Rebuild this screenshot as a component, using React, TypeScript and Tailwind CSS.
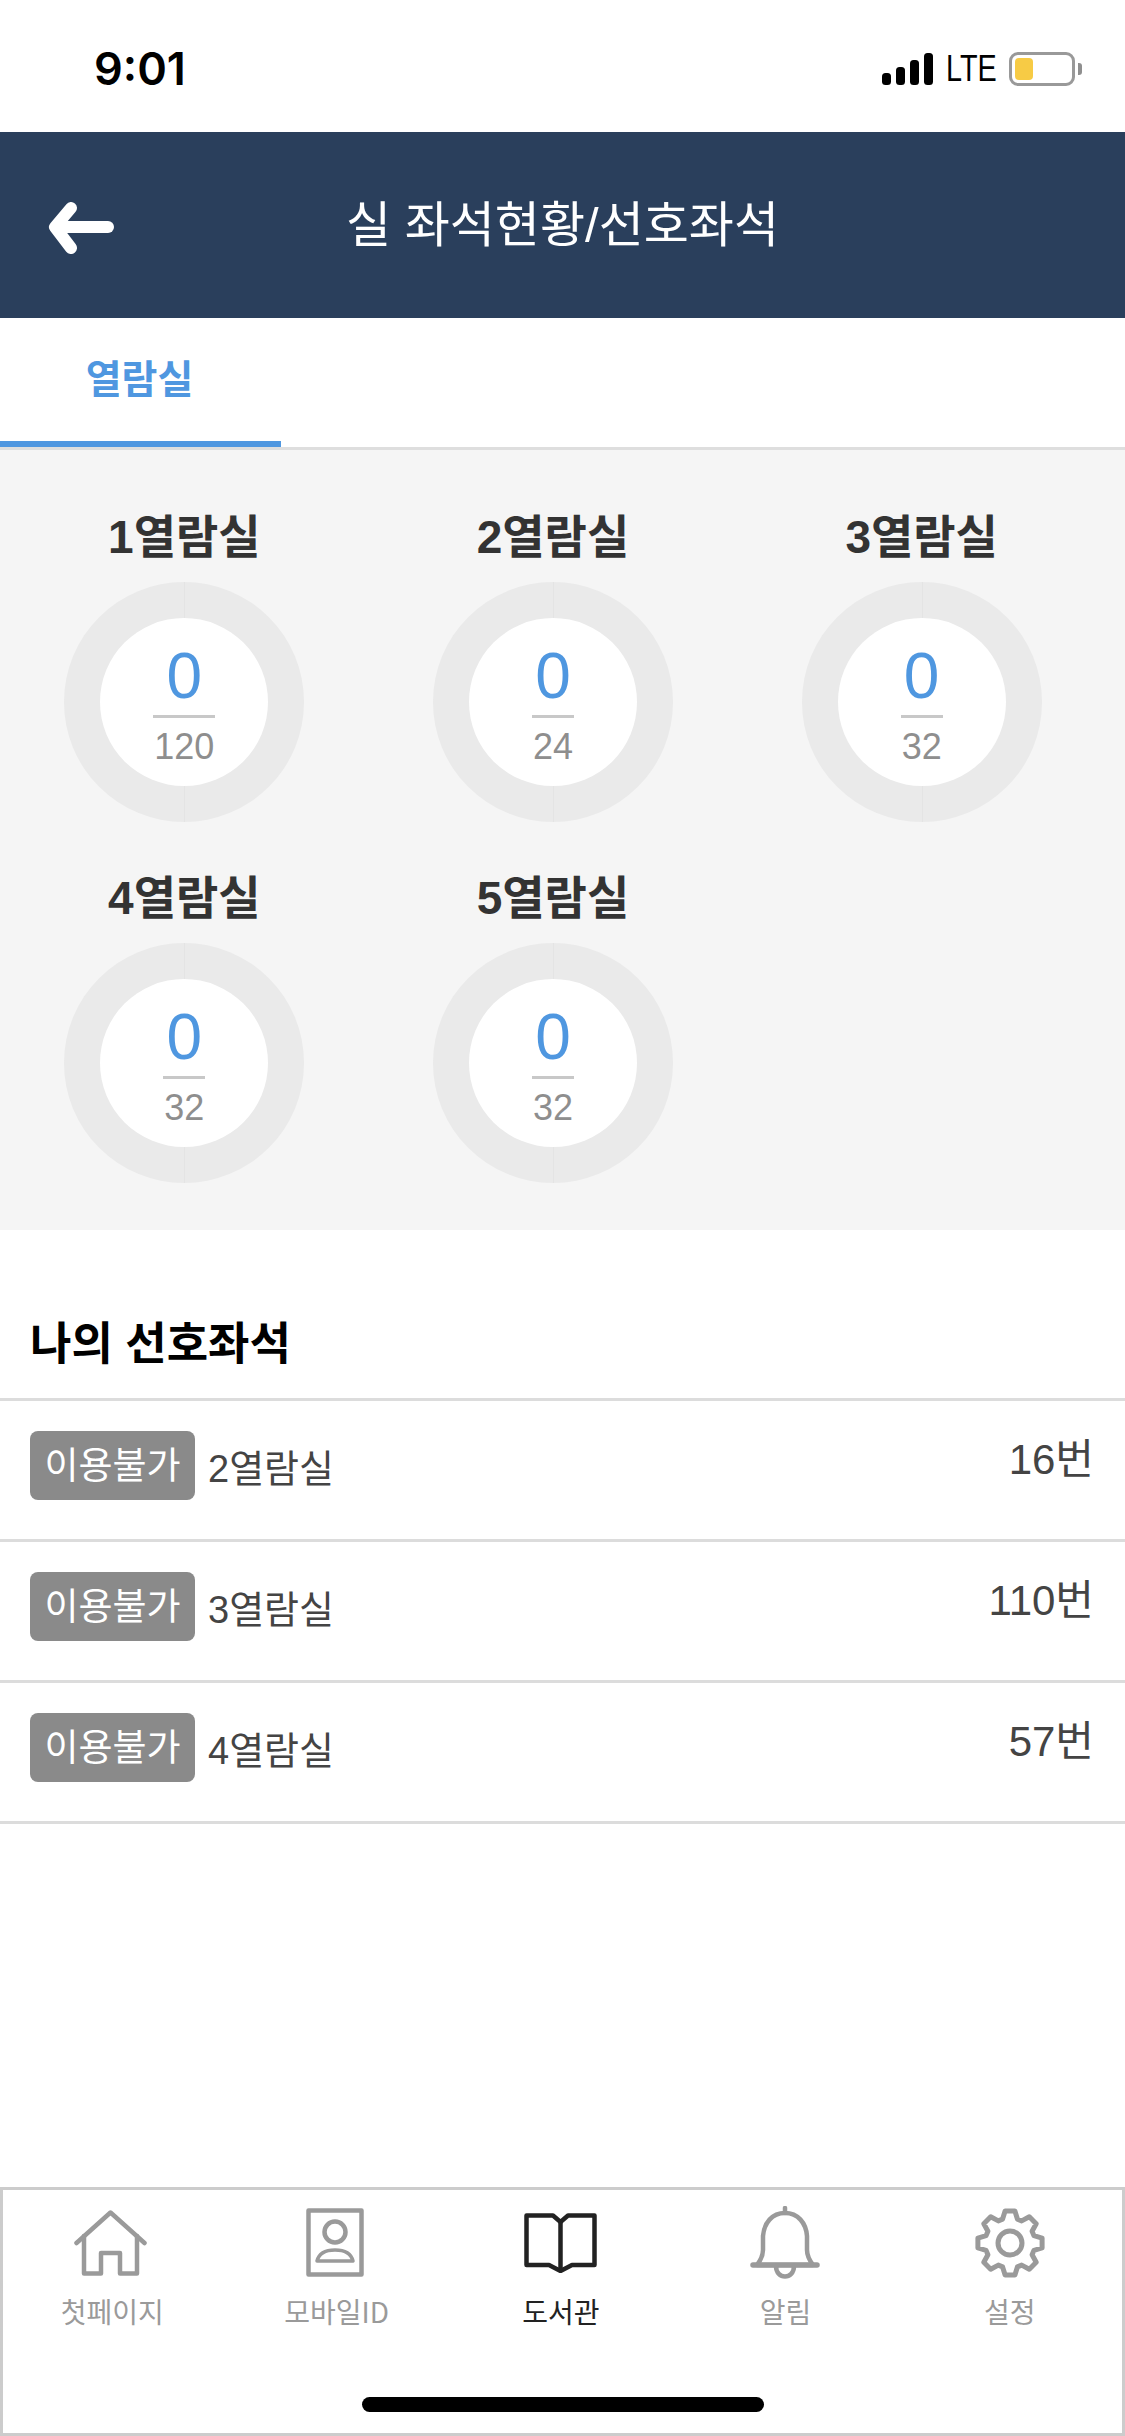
const rooms = [
  { name: "1열람실", used: 0, total: 120 },
  { name: "2열람실", used: 0, total: 24 },
  { name: "3열람실", used: 0, total: 32 },
  { name: "4열람실", used: 0, total: 32 },
  { name: "5열람실", used: 0, total: 32 },
];

const favorites = [
  { room: "2열람실", seat: "16번" },
  { room: "3열람실", seat: "110번" },
  { room: "4열람실", seat: "57번" },
];

// 8 tooth gear outline, worked out once instead of hand typing 40 points
const gearPath = () => {
  const cx = 35;
  const cy = 35;
  const pts: string[] = [];
  for (let i = 0; i < 8; i++) {
    const a = (i * Math.PI) / 4 - Math.PI / 2;
    const step = [
      [-0.3, 25],
      [-0.15, 32.5],
      [0.15, 32.5],
      [0.3, 25],
    ];
    step.forEach(([da, r]) => {
      pts.push(`${(cx + r * Math.cos(a + da)).toFixed(1)} ${(cy + r * Math.sin(a + da)).toFixed(1)}`);
    });
  }
  return "M" + pts.join(" L") + " Z";
};

const StatusBar = () => (
  <div className="h-[132px] bg-white flex items-start justify-between pl-[94px] pr-[43px] pt-[40px]">
    <p className="text-[45px] leading-[58px] font-semibold text-black font-['Inter',sans-serif]">9:01</p>
    <div className="flex items-center pt-[11px]">
      <svg width="51" height="32" viewBox="0 0 51 32" fill="#000">
        <rect x="0" y="20" width="9" height="12" rx="3.5" />
        <rect x="14" y="14" width="9" height="18" rx="3.5" />
        <rect x="28" y="7" width="9" height="25" rx="3.5" />
        <rect x="42" y="0" width="9" height="32" rx="3.5" />
      </svg>
      <span className="ml-[13px] w-[50px] text-[36px] leading-[36px] text-black origin-left scale-x-[0.8] font-['Liberation_Sans',sans-serif]">LTE</span>
      <div className="ml-[13px] w-[66px] h-[34px] rounded-[9px] border-[3px] border-[#999999] p-[3px]">
        <div className="w-[18px] h-[22px] rounded-[4px] bg-[#f7cb45]"></div>
      </div>
      <div className="ml-[3px] w-[4px] h-[12px] rounded-r-[3px] bg-[#8f8f8f]"></div>
    </div>
  </div>
);

const RoomCell = ({ name, used, total }: { name: string; used: number; total: number }) => (
  <div className="flex flex-col items-center">
    <p className="text-[46px] leading-[60px] font-bold text-[#333333]">{name}</p>
    <div className="relative mt-[15px] w-[240px] h-[240px] rounded-full bg-[#eaeaea] flex items-center justify-center">
      <div className="absolute top-0 bottom-0 left-[120px] w-px bg-[#e4e4e4]"></div>
      <div className="relative w-[168px] h-[168px] rounded-full bg-white flex justify-center pt-[24px]">
        <div className="inline-flex flex-col items-center h-fit">
          <span className="text-[64px] leading-[68px] text-[#4f97e0]">{used}</span>
          <div className="w-full h-[3px] bg-[#c8c8c8] mt-[5px]"></div>
          <span className="mt-[9px] px-[1px] text-[36px] leading-[40px] text-[#8e8e8e]">{total}</span>
        </div>
      </div>
    </div>
  </div>
);

const FavoriteRow = ({ room, seat }: { room: string; seat: string }) => (
  <div className="h-[141px] border-b-[3px] border-[#dcdcdc] flex items-center pl-[30px] pr-[31px]">
    <span className="mb-[9px] w-[165px] h-[69px] rounded-[8px] bg-[#8a8a8a] text-white text-[37px] leading-[72px] text-center">이용불가</span>
    <span className="ml-[13px] mb-[2px] text-[38px] leading-[46px] text-[#444444]">{room}</span>
    <span className="ml-auto mb-[20px] text-[42px] leading-[46px] text-[#444444]">{seat}</span>
  </div>
);

const NavItem = ({ label, active, children }: { label: string; active?: boolean; children: React.ReactNode }) => (
  <div className="flex flex-col items-center">
    <div className="h-[73px] flex items-center justify-center">{children}</div>
    <p className={`mt-[12px] text-[28px] leading-[40px] font-['Noto_Sans_CJK_KR',sans-serif] ${active ? "text-[#222222]" : "text-[#9a9a9a]"}`}>{label}</p>
  </div>
);

const BottomNav = () => (
  <div className="mt-auto h-[249px] shadow-[inset_0_0_0_3px_#cccccc] bg-white flex flex-col">
    <div className="grid grid-cols-5 pt-[19px] pr-[3px]">
      <NavItem label="첫페이지">
        <svg className="mr-[3px]" width="73" height="66" viewBox="0 0 73 66" fill="none" stroke="#9a9a9a" strokeWidth="4.5" strokeLinecap="round" strokeLinejoin="round">
          <path d="M2.5 33 L36.5 2.5 L70.5 33" />
          <path d="M10 26 V63.5 H27 V43 H46 V63.5 H63 V26" />
        </svg>
      </NavItem>
      <NavItem label="모바일ID">
        <svg className="mr-[3px]" width="58" height="69" viewBox="0 0 58 69" fill="none" stroke="#9a9a9a" strokeWidth="4.5" strokeLinejoin="round">
          <rect x="2.5" y="2.5" width="53" height="64" />
          <circle cx="29" cy="24" r="10.5" />
          <path d="M11 53 C13 45 20 42 29 42 C38 42 45 45 47 53 Z" strokeWidth="3.5" />
        </svg>
      </NavItem>
      <NavItem label="도서관" active>
        <svg width="73" height="60" viewBox="0 0 73 60" fill="none" stroke="#222222" strokeWidth="4.5" strokeLinejoin="round" strokeLinecap="round">
          <path d="M36.5 9 L29 2.5 H2.5 V52 H25 L36.5 58 L48 52 H70.5 V2.5 H44 Z" />
          <path d="M36.5 9 V56" />
        </svg>
      </NavItem>
      <NavItem label="알림">
        <svg width="70" height="73" viewBox="0 0 70 73" fill="none" stroke="#9a9a9a" strokeWidth="4.5" strokeLinecap="round" strokeLinejoin="round">
          <path d="M35 2 V7" />
          <path d="M35 7 C22 7 14 17 13 30 V44 C13 50 10 55 7 59 H63 C60 55 57 50 57 44 V30 C56 17 48 7 35 7 Z" />
          <path d="M3 59 H67" strokeWidth="5.5" />
          <path d="M26 60 C26 74 44 74 44 60" />
        </svg>
      </NavItem>
      <NavItem label="설정">
        <svg width="70" height="70" viewBox="0 0 70 70" fill="none" stroke="#9a9a9a" strokeWidth="5" strokeLinejoin="round">
          <path d={gearPath()} />
          <circle cx="35" cy="35" r="12" />
        </svg>
      </NavItem>
    </div>
    <div className="mt-auto mb-[24px] mx-auto w-[402px] h-[15px] rounded-full bg-black"></div>
  </div>
);

const App = () => {
  return (
    <div className="w-[1125px] min-h-[2436px] bg-white flex flex-col font-['Liberation_Sans','Noto_Sans_CJK_KR',sans-serif]">
      <StatusBar />

      <div className="h-[186px] bg-[#2a3f5c] relative flex items-center justify-center">
        <svg className="absolute left-[48px] top-[70px]" width="66" height="52" viewBox="0 0 66 52" fill="none" stroke="#fff" strokeWidth="12" strokeLinecap="round" strokeLinejoin="round">
          <path d="M60 25 H10" />
          <path d="M23 6 L7 25 L23 46" />
        </svg>
        <p className="text-[49px] leading-[60px] text-white">실 좌석현황/선호좌석</p>
      </div>

      <div className="h-[132px] border-b-[3px] border-[#dedede] flex">
        <div className="w-[281px] border-b-[6px] border-[#4f97e0] flex items-center justify-center pr-[2px]">
          <span className="text-[39px] leading-[52px] font-semibold text-[#4f97e0]">열람실</span>
        </div>
      </div>

      <div className="h-[780px] bg-[#f5f5f5] pt-[57px] pr-[19px]">
        <div className="grid grid-cols-3 gap-y-[46px]">
          {rooms.map((room) => (
            <RoomCell key={room.name} {...room} />
          ))}
        </div>
      </div>

      <div className="h-[171px] border-b-[3px] border-[#dcdcdc] flex items-end pl-[30px] pb-[23px]">
        <p className="text-[45px] leading-[60px] font-bold text-black">나의 선호좌석</p>
      </div>

      {favorites.map((item) => (
        <FavoriteRow key={item.room} {...item} />
      ))}

      <BottomNav />
    </div>
  );
};

export default App;
